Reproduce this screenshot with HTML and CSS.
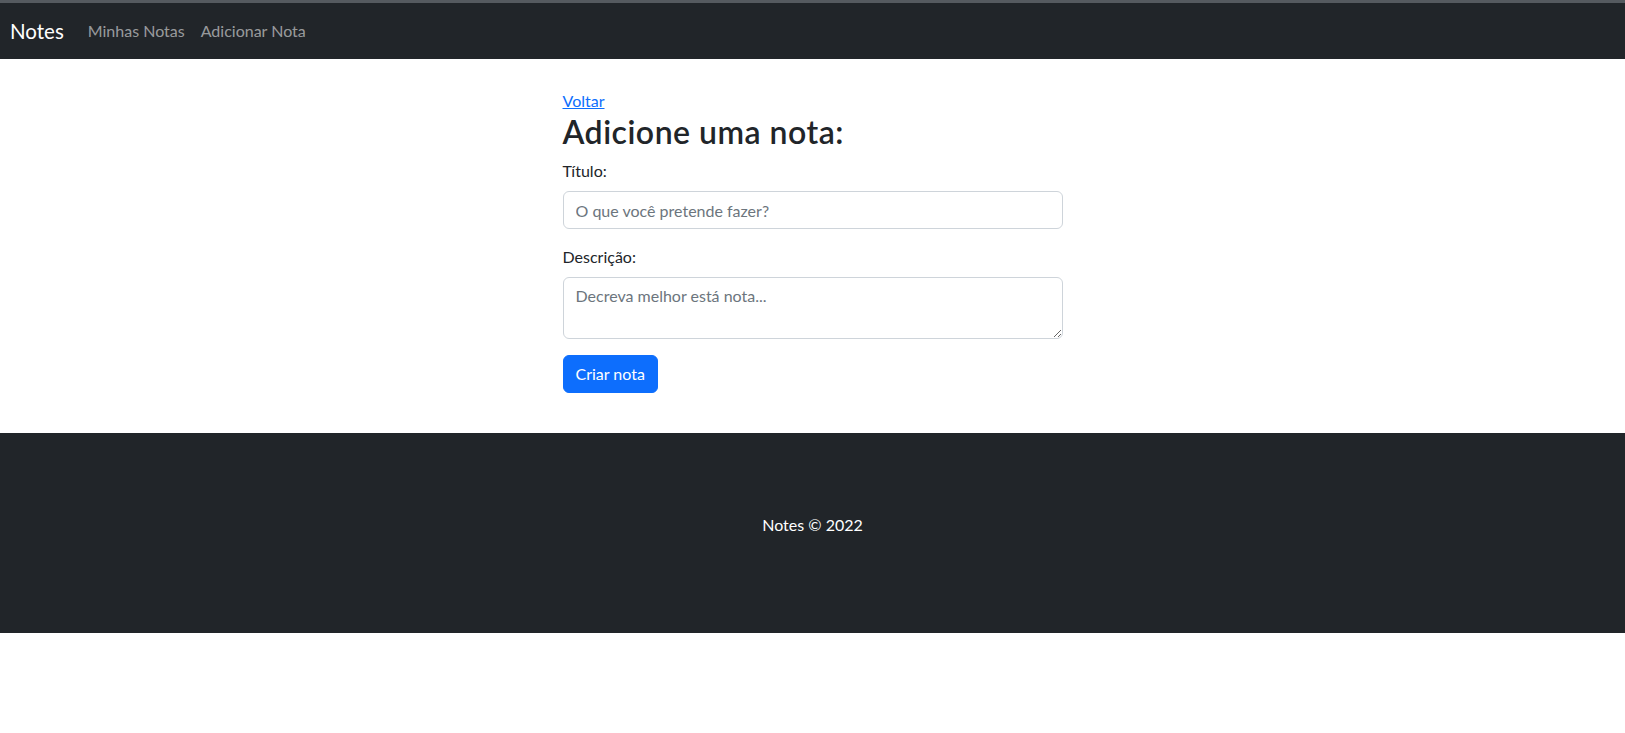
FILE: index.html
```html
<!DOCTYPE html>
<html lang="pt-BR">
<head>
<meta charset="utf-8">
<title>Notes</title>
<link rel="stylesheet" href="styles.css">
</head>
<body>
<div class="topline"></div>
<nav class="navbar">
  <a class="brand" href="#">Notes</a>
  <ul class="nav">
    <li><a class="nav-link" href="#">Minhas Notas</a></li>
    <li><a class="nav-link" href="#">Adicionar Nota</a></li>
  </ul>
</nav>
<main class="content">
  <a class="back" href="#">Voltar</a>
  <h2 class="title">Adicione uma nota:</h2>
  <form class="form">
    <div class="field">
      <label class="label" for="titulo">Título:</label>
      <input class="control" id="titulo" type="text" placeholder="O que você pretende fazer?">
    </div>
    <div class="field">
      <label class="label" for="descricao">Descrição:</label>
      <textarea class="control area" id="descricao" rows="2" placeholder="Decreva melhor está nota..."></textarea>
    </div>
    <button class="btn" type="button">Criar nota</button>
  </form>
</main>
<footer class="footer">
  <p class="copy">Notes © 2022</p>
</footer>
</body>
</html>
```
FILE: styles.css
```css
* { box-sizing: border-box; }
html, body {
  margin: 0;
  padding: 0;
}
body {
  font-family: "Lato", "Noto Sans", sans-serif;
  font-size: 16px;
  line-height: 24px;
  color: #212529;
  background: #fff;
}
.topline {
  height: 3px;
  background: #555a5f;
}
.navbar {
  display: flex;
  align-items: center;
  background: #212529;
  height: 56px;
  padding: 0 10px;
}
.brand {
  color: #fff;
  text-decoration: none;
  font-size: 20.5px;
  line-height: 30px;
  margin-right: 16px;
  padding: 5px 0;
}
.nav {
  display: flex;
  list-style: none;
  margin: 0;
  padding: 0;
}
.nav-link {
  display: block;
  padding: 8px;
  color: rgba(255, 255, 255, 0.55);
  text-decoration: none;
}
.content {
  width: 500px;
  margin: 0 auto;
  padding: 30px 0 40px;
}
.back {
  color: #0d6efd;
  text-decoration: underline;
}
.title {
  margin: 0 0 8px;
  font-size: 32px;
  line-height: 38px;
  font-weight: 600;
  letter-spacing: 0.5px;
}
.field {
  margin-bottom: 16px;
}
.label {
  display: inline-block;
  margin-bottom: 8px;
}
.control {
  display: block;
  width: 100%;
  height: 38px;
  padding: 6px 12px;
  font: inherit;
  color: #212529;
  border: 1px solid #ced4da;
  border-radius: 6px;
  background: #fff;
}
.control::placeholder {
  color: #6c757d;
}
.area {
  height: 62px;
  resize: vertical;
}
.btn {
  height: 38px;
  padding: 6px 12px;
  font: inherit;
  color: #fff;
  background: #0d6efd;
  border: 1px solid #0d6efd;
  border-radius: 6px;
}
.footer {
  background: #212529;
  color: #fff;
  text-align: center;
  padding: 80px 0;
}
.copy {
  margin: 0 0 16px;
}
```
